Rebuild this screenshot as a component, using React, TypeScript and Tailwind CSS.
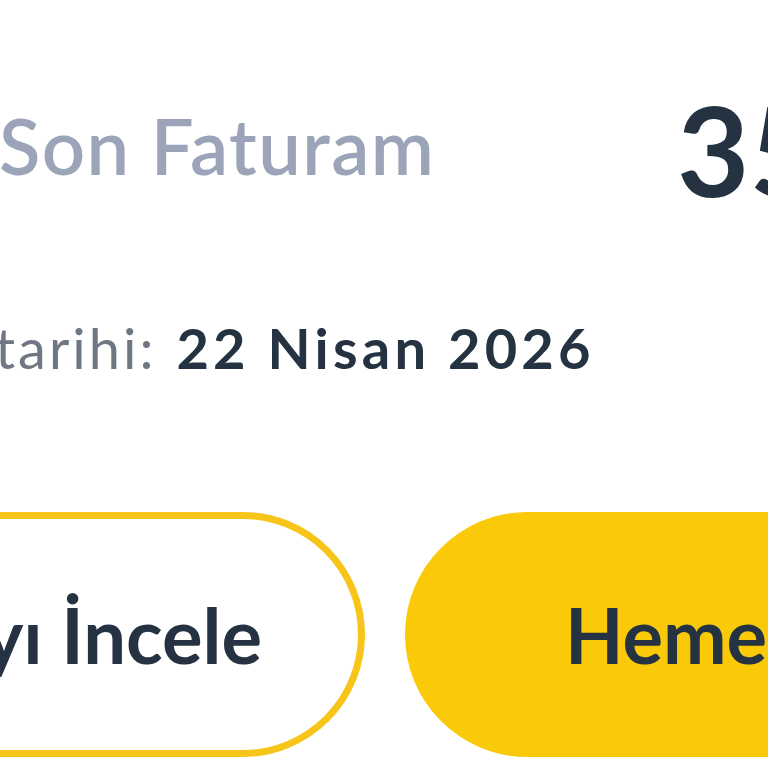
import React from "react";

export default function App() {
  return (
    <div
      className="w-[768px] h-[768px] overflow-hidden bg-white"
      style={{ fontFamily: "Lato, 'Noto Sans', sans-serif" }}
    >
      <div className="pt-[87px]">
        <div className="flex items-start whitespace-nowrap">
          <div className="w-[678px] shrink-0 -ml-[1px]">
            <div className="mt-[21px] text-[76px] leading-none font-semibold tracking-[1.4px] text-[#9ba4b9]">
              Son Faturam
            </div>
          </div>
          <div className="text-[125px] leading-none font-bold text-[#243241]">
            35,90 TL
          </div>
        </div>

        <div className="mt-[108px] -ml-[5px] flex items-baseline whitespace-nowrap text-[56px] leading-none">
          <span className="text-[#6f7782] font-normal tracking-[3px]">tarihi:</span>
          <span className="ml-[20px] font-bold tracking-[4.2px] text-[#243241]">22 Nisan 2026</span>
        </div>

        <div className="mt-[136px] flex gap-[40px] -ml-[200px]">
          <button className="w-[565px] h-[245px] shrink-0 rounded-full border-[7px] border-[#f7c51a] bg-white flex items-center justify-end pr-[96px] whitespace-nowrap">
            <span className="text-[76px] leading-none font-bold text-[#243241]">
              Faturayı İncele
            </span>
          </button>
          <button className="w-[560px] h-[245px] shrink-0 rounded-full bg-[#fac90a] flex items-center justify-start pl-[160px] whitespace-nowrap">
            <span className="text-[76px] leading-none font-bold text-[#243241]">
              Hemen Öde
            </span>
          </button>
        </div>
      </div>
    </div>
  );
}
